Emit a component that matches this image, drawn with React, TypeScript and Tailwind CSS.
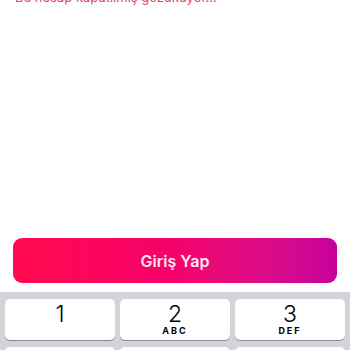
import React from "react";

const keys = [
  { n: "1", l: "" },
  { n: "2", l: "ABC" },
  { n: "3", l: "DEF" },
];

export default function App() {
  return (
    <div
      className="flex h-[350px] w-[350px] flex-col overflow-hidden bg-white"
      style={{ fontFamily: "Inter, 'Liberation Sans', sans-serif" }}
    >
      <p className="-mt-[11px] shrink-0 pl-[15px] text-[13px] leading-[17px] text-[#e54867]">
        Bu hesap kapatılmış gözüküyor...
      </p>

      <div className="mt-[232px] shrink-0 px-[13px] pb-[9px]">
        <button className="flex h-[45px] w-full items-center justify-center rounded-[9px] bg-gradient-to-r from-[#ff0a4e] via-[#f5006a] to-[#c8009c] text-[16px] font-semibold text-white/90">
          Giriş Yap
        </button>
      </div>

      <div className="grid shrink-0 grid-cols-3 gap-x-[5px] gap-y-[7px] bg-[#d2d4da] px-[5px] pt-[7px] pb-[7px]">
        {keys.map((k) => (
          <div
            key={k.n}
            className="flex h-[41px] flex-col items-center rounded-[5px] bg-white shadow-[0_1px_0_#8a8b8f]"
          >
            <span className="mt-[3px] text-[23px] font-light leading-[24px] text-black">
              {k.n}
            </span>
            {k.l && (
              <span className="text-[9px] font-bold leading-[10px] tracking-[2px] text-black">
                {k.l}
              </span>
            )}
          </div>
        ))}
        {/* second row, only its top edge shows */}
        {[0, 1, 2].map((i) => (
          <div
            key={i}
            className="h-[41px] rounded-[5px] bg-white shadow-[0_1px_0_#8a8b8f]"
          />
        ))}
      </div>
    </div>
  );
}
